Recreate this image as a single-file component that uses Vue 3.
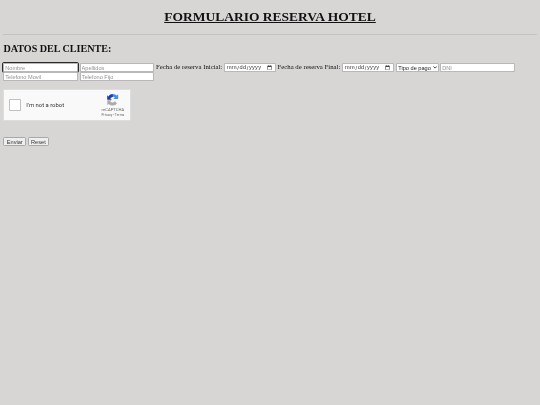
<script setup>
</script>

<template>
  <div class="page">
    <h1 class="title">FORMULARIO RESERVA HOTEL</h1>
    <hr />
    <h2>DATOS DEL CLIENTE:</h2>
    <form class="form" onsubmit="return false">
      <input class="field focused" type="text" placeholder="Nombre" />
      {{ ' ' }}
      <input class="field" type="text" placeholder="Apellidos" />
      {{ ' ' }}
      Fecha de reserva Inicial:
      {{ ' ' }}
      <input class="field date" type="date" />
      {{ ' ' }}
      Fecha de reserva Final:
      {{ ' ' }}
      <input class="field date" type="date" />
      {{ ' ' }}
      <span class="select-wrap">
        <select class="field pay">
          <option>Tipo de pago</option>
        </select>
        <svg class="chevron" viewBox="0 0 10 6" width="10" height="6" aria-hidden="true">
          <path d="M1 1l4 4 4-4" fill="none" stroke="#222" stroke-width="2" />
        </svg>
      </span>
      {{ ' ' }}
      <input class="field" type="text" placeholder="DNI" />
      {{ ' ' }}
      <input class="field" type="text" placeholder="Telefono Movil" />
      {{ ' ' }}
      <input class="field" type="text" placeholder="Telefono Fijo" />
      <div class="captcha">
        <span class="check"></span>
        <span class="robot">I'm not a robot</span>
        <div class="brand">
          <svg class="logo" viewBox="0 0 64 64" width="32" height="32" aria-hidden="true">
            <path d="M58 32a26 26 0 0 0-.3-3.900V6l-6.200 6.200A26 26 0 0 0 12 14.600l10.400 10.500a13 13 0 0 1 3.700-4.300 13 13 0 0 1 15.700-.2L35 28h23z" fill="#4a90e2" />
            <path d="M32 6a26 26 0 0 0-20.600 10.100L5.700 10.500V32h21.800l-7.200-7.300A13 13 0 0 1 32 19z" fill="#1c3aa9" />
            <path d="M6 32a26 26 0 0 0 .3 3.900V58l6.200-6.200A26 26 0 0 0 52 49.400L41.600 39a13 13 0 0 1-21.500 1.600L27 34H6z" fill="#ababab" />
          </svg>
          <div class="name">reCAPTCHA</div>
          <div class="terms">Privacy - Terms</div>
        </div>
      </div>
      <div class="actions">
        <input class="btn" type="submit" value="Enviar" />
        {{ ' ' }}
        <input class="btn" type="reset" value="Reset" />
      </div>
    </form>
  </div>
</template>

<style>
html,
body {
  margin: 0;
  background: #d8d5d5;
}
</style>

<style scoped>
.page {
  zoom: 0.421875;
  padding: 9.5px 8px 8px;
  min-height: 942px;
  font-family: "Liberation Serif", "Times New Roman", serif;
  color: #111;
  will-change: transform;
}
.title {
  text-align: center;
  text-decoration: underline;
  font-size: 2em;
  margin: 12px 0 21.44px;
}
hr {
  border: 0;
  height: 2px;
  background: #c4c2c2;
  margin: 8px 0;
}
h2 {
  font-size: 1.5em;
  margin: 18px 0 23px;
}
.form {
  margin: 0;
  font-size: 16px;
}
.field {
  box-sizing: border-box;
  width: 177px;
  height: 21.5px;
  padding: 1px 2px;
  border: 1px solid #b9b7b7;
  border-radius: 2px;
  background: #fff;
  font-family: "Liberation Sans", Arial, sans-serif;
  font-size: 13.33px;
  color: #333;
  vertical-align: middle;
}
.field::placeholder {
  color: #949292;
}
.focused {
  outline: 2px solid #2a2a2a;
  outline-offset: -1px;
}
.date {
  width: 123px;
  padding: 1px 4px;
  letter-spacing: 0.6px;
}
.select-wrap {
  position: relative;
  display: inline-block;
  vertical-align: middle;
}
.pay {
  display: block;
  width: 102px;
  padding: 1px 4px;
  appearance: none;
  color: #222;
}
.chevron {
  position: absolute;
  right: 4px;
  top: 7px;
}
.captcha {
  box-sizing: border-box;
  width: 302px;
  height: 75px;
  margin-top: 18px;
  background: #f9f9f9;
  border: 1px solid #dedddd;
  border-radius: 3px;
  display: flex;
  align-items: center;
  padding: 0 10px 0 12px;
  font-family: Roboto, "Liberation Sans", sans-serif;
}
.check {
  box-sizing: border-box;
  width: 28px;
  height: 28px;
  background: #fff;
  border: 2px solid #c1c1c1;
  border-radius: 2px;
}
.robot {
  margin-left: 12px;
  font-size: 14px;
  color: #333;
}
.brand {
  margin-left: auto;
  width: 60px;
  display: flex;
  flex-direction: column;
  align-items: center;
  color: #666;
}
.logo {
  margin-bottom: 2px;
}
.name {
  font-size: 10px;
}
.terms {
  font-size: 8px;
  margin-top: 2px;
}
.actions {
  margin-top: 39px;
}
.btn {
  box-sizing: border-box;
  height: 21.5px;
  width: 54px;
  padding: 1px 4px;
  background: #efefef;
  border: 1px solid #a9a7a7;
  border-radius: 3px;
  font-family: "Liberation Sans", Arial, sans-serif;
  font-size: 13.33px;
  color: #333;
}
.btn[type="reset"] {
  width: 50px;
}
</style>
